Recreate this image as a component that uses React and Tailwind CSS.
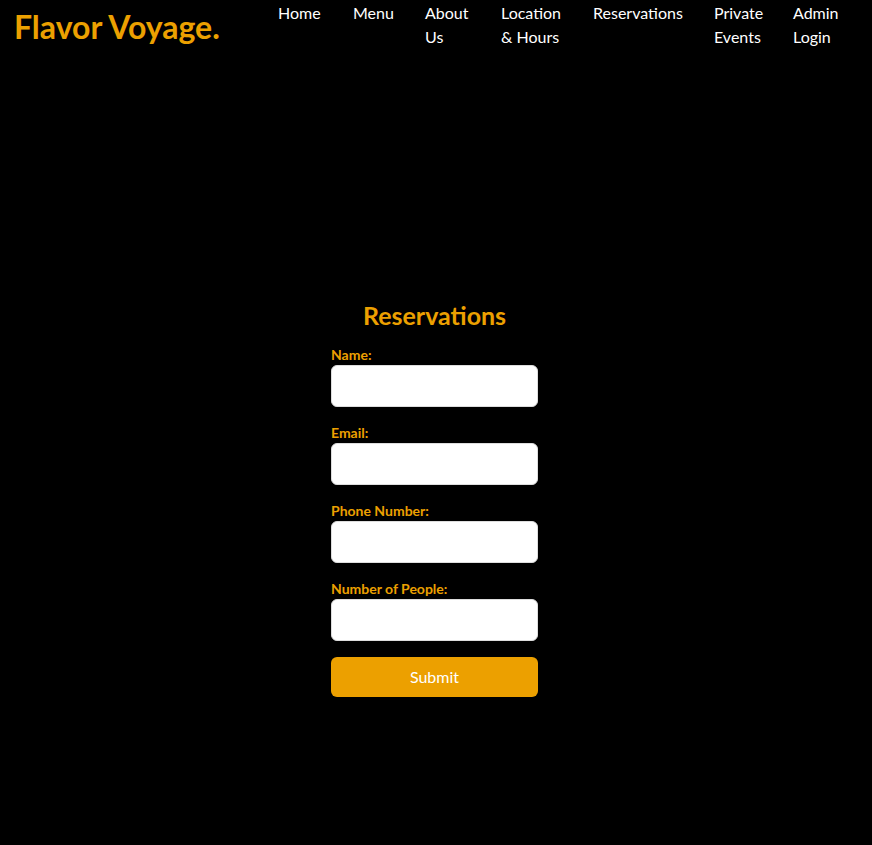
import React from "react";

const navItems = [
  { label: "Home", w: "w-[75px]", inner: "w-[43px]" },
  { label: "Menu", w: "w-[72px]", inner: "w-[41px]" },
  { label: "About Us", w: "w-[76px]", inner: "w-[44px]" },
  { label: "Location & Hours", w: "w-[92px]", inner: "w-[60px]" },
  { label: "Reservations", w: "w-[121px]", inner: "w-[89px]" },
  { label: "Private Events", w: "w-[79px]", inner: "w-[48px]" },
  { label: "Admin Login", w: "w-[79px]", inner: "w-[47px]" },
];

const fields = ["Name:", "Email:", "Phone Number:", "Number of People:"];

export default function App() {
  return (
    <div
      className="min-h-[845px] bg-black text-white"
      style={{ fontFamily: "Lato, 'Open Sans', sans-serif" }}
    >
      <header className="flex items-start justify-between">
        <div className="pl-[14px] pt-[8px] text-[32px] font-bold leading-[38px] text-[#eca000]">
          Flavor Voyage.
        </div>
        <ul className="flex pt-[1px]">
          {navItems.map((n) => (
            <li key={n.label} className={n.w}>
              <a href="#" className={`block ${n.inner} text-[16px] leading-[24px] text-white`}>
                {n.label}
              </a>
            </li>
          ))}
        </ul>
      </header>

      <main className="flex justify-center pr-[3px] pt-[250px]">
        <form className="flex w-[207px] flex-col" onSubmit={(e) => e.preventDefault()}>
          <h2 className="mb-[14px] text-center text-[25px] font-bold leading-[32px] text-[#eca000]">
            Reservations
          </h2>
          {fields.map((f) => (
            <div key={f} className="mb-[16px] flex flex-col">
              <label className="text-[14px] font-bold leading-[20px] text-[#eca000]">{f}</label>
              <input
                type="text"
                className="h-[42px] w-full rounded-[6px] border border-[#dddddd] bg-white px-2 text-black outline-none"
              />
            </div>
          ))}
          <button
            type="submit"
            className="h-[40px] w-full rounded-[6px] bg-[#eca000] text-[16px] text-white"
          >
            Submit
          </button>
        </form>
      </main>
    </div>
  );
}
